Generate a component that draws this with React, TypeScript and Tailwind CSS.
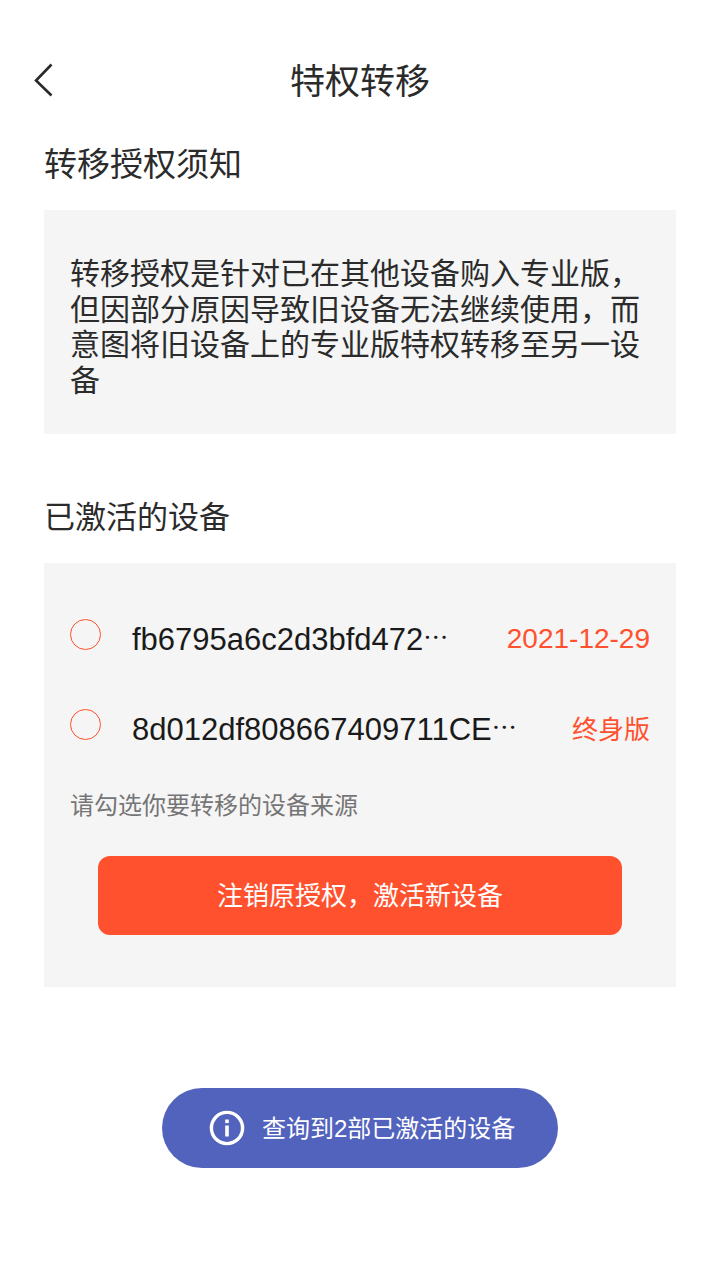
const FONT = 'font-["Liberation_Sans","Noto_Sans_CJK_SC",sans-serif]';
const COMMA = '\uFF0C';
const DOTS = '\u22EF';

function DeviceRow({ id, tag, tagSize, className = '' }: { id: string; tag: string; tagSize: string; className?: string }) {
  return (
    <div className={`flex items-center h-[46px] ${className}`}>
      <span className="w-[31px] h-[31px] -mt-[9px] rounded-full border border-[#ff512d] shrink-0" />
      <span className="ml-[31px] text-[31px] leading-[46px] text-[#1a1a1a] whitespace-nowrap">
        {id}
        <span className='inline-block -translate-y-[3px] font-["Noto_Sans_CJK_SC",sans-serif] text-[25px]'>{DOTS}</span>
      </span>
      <span className={`ml-auto ${tagSize} leading-[46px] text-[#ff512d] whitespace-nowrap`}>{tag}</span>
    </div>
  );
}

export default function App() {
  return (
    <div className={`w-[720px] h-[1280px] bg-white overflow-hidden flex flex-col ${FONT}`}>
      {/* header */}
      <div className="relative h-[48px] mt-[56px] flex items-center justify-center">
        <svg className="absolute left-[33px] top-[6px]" width="22" height="36" viewBox="0 0 22 36" fill="none">
          <path d="M18.5 2.5 L3 18.5 L18.5 33.5" stroke="#2a2a2a" strokeWidth="2.6" />
        </svg>
        <h1 className="pt-[3px] text-[35px] leading-[48px] font-normal text-[#2b2b2b]">特权转移</h1>
      </div>

      <div className="px-[44px] flex flex-col">
        <h2 className="mt-[36px] pt-[1px] h-[48px] text-[33px] leading-[48px] text-[#2b2b2b]">转移授权须知</h2>
        <div className="mt-[22px] h-[224px] bg-[#f5f5f5] px-[26px] pt-[46px]">
          <p className="text-[30px] leading-[35.6px] text-[#2b2b2b]">
            转移授权是针对已在其他设备购入专业版{COMMA}
            <br />
            但因部分原因导致旧设备无法继续使用{COMMA}而
            <br />
            意图将旧设备上的专业版特权转移至另一设
            <br />
            {'\u5907'}
          </p>
        </div>

        <h2 className="mt-[60px] text-[31px] leading-[48px] text-[#2b2b2b]">已激活的设备</h2>
        <div className="mt-[21px] h-[424px] bg-[#f5f5f5] px-[26px] pt-[53px]">
          <DeviceRow id="fb6795a6c2d3bfd472" tag="2021-12-29" tagSize="text-[28px]" />
          <DeviceRow id="8d012df808667409711CE" tag="终身版" tagSize="pt-[1px] text-[26px]" className="mt-[44px]" />
          <p className="mt-[37px] text-[24px] leading-[34px] text-[#757575]">请勾选你要转移的设备来源</p>
          <button className="mt-[33px] mx-[28px] w-[524px] h-[79px] pt-[2px] rounded-[12px] bg-[#ff512d] text-[26px] text-white">
            注销原授权{COMMA}激活新设备
          </button>
        </div>
      </div>

      {/* toast */}
      <div className="mt-[101px] mx-auto w-[396px] h-[80px] rounded-[40px] bg-[#5263bd] flex items-center pl-[47px]">
        <svg width="36" height="36" viewBox="0 0 36 36" fill="none">
          <circle cx="18" cy="18" r="15.6" stroke="white" strokeWidth="3.4" />
          <rect x="16.2" y="15.5" width="3.6" height="11" fill="white" />
          <rect x="16.2" y="9.5" width="3.6" height="3.6" fill="white" />
        </svg>
        <span className="ml-[17px] pt-[1px] text-[24px] text-white whitespace-nowrap">查询到2部已激活的设备</span>
      </div>
    </div>
  );
}
